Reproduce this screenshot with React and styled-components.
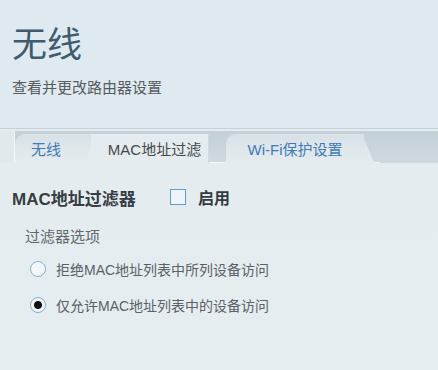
import React, { useState } from "react";
import styled, { createGlobalStyle } from "styled-components";

const GlobalStyle = createGlobalStyle`
  html, body {
    margin: 0;
    padding: 0;
    background: #e5ecf0;
    font-family: "Liberation Sans", "Noto Sans CJK SC", sans-serif;
  }
`;

const tabs = [
  { id: "wireless", label: "无线", width: 76, pad: "0 22px 0 8px" },
  { id: "mac", label: "MAC地址过滤", width: 118, pad: "0 4px 0 14px" },
  { id: "wps", label: "Wi-Fi保护设置", width: 138, pad: "0 10px 0 10px" },
];

const options = [
  { id: "deny", label: "拒绝MAC地址列表中所列设备访问" },
  { id: "allow", label: "仅允许MAC地址列表中的设备访问" },
];

const App = () => {
  const [active, setActive] = useState("mac");
  const [mode, setMode] = useState("allow");
  const [enabled, setEnabled] = useState(false);

  return (
    <Page>
      <GlobalStyle />
      <Header>
        <Title>无线</Title>
        <Subtitle>查看并更改路由器设置</Subtitle>
      </Header>
      <TabBar>
        {tabs.map((tab) => (
          <Tab
            key={tab.id}
            $active={tab.id === active}
            $width={tab.width}
            $pad={tab.pad}
            onClick={() => setActive(tab.id)}
          >
            {tab.label}
          </Tab>
        ))}
      </TabBar>
      <Content>
        <FilterRow>
          <SectionTitle>MAC地址过滤器</SectionTitle>
          <CheckLabel>
            <CheckBox
              $checked={enabled}
              onClick={() => setEnabled(!enabled)}
            />
            启用
          </CheckLabel>
        </FilterRow>
        <GroupLabel>过滤器选项</GroupLabel>
        <RadioList>
          {options.map((opt) => (
            <RadioRow key={opt.id} onClick={() => setMode(opt.id)}>
              <Radio $checked={mode === opt.id} />
              <RadioText>{opt.label}</RadioText>
            </RadioRow>
          ))}
        </RadioList>
      </Content>
    </Page>
  );
};

const Page = styled.div`
  width: 438px;
  height: 370px;
  overflow: hidden;
  background: linear-gradient(180deg, #e4ebef 0%, #e6edf1 100%);
`;

const Header = styled.div`
  height: 129px;
  background: #dfe9f0;
  padding: 22px 0 0 12px;
  box-sizing: border-box;
  border-bottom: 1px solid #c6cfd5;
`;

const Title = styled.div`
  font-family: "Noto Sans CJK SC", sans-serif;
  font-size: 35px;
  line-height: 40px;
  color: #3e5b6f;
`;

const Subtitle = styled.div`
  font-family: "Noto Sans CJK SC", sans-serif;
  margin-top: 15px;
  font-size: 15px;
  line-height: 20px;
  color: #565c61;
`;

const TabBar = styled.div`
  display: flex;
  align-items: flex-end;
  height: 32px;
  margin: 2px 0 0 14px;
  border-left: 1px solid #f4f7f9;
  background: linear-gradient(180deg, #c3d0d7 0%, #cfdae0 100%);
  box-shadow: -14px 0 0 #e2e9ed;
  position: relative;
  &::after {
    content: "";
    position: absolute;
    left: 0;
    right: 58px;
    bottom: 0;
    height: 1px;
    background: #f2f6f8;
  }
`;

const Tab = styled.div`
  position: relative;
  z-index: ${(p) => (p.$active ? 2 : 1)};
  height: 29px;
  display: flex;
  align-items: center;
  justify-content: center;
  box-sizing: border-box;
  padding: ${(p) => p.$pad};
  width: ${(p) => p.$width}px;
  margin-right: ${(p) => (p.$active ? "17px" : "0")};
  font-family: "Liberation Sans", "Noto Sans CJK SC", sans-serif;
  font-size: 15px;
  white-space: nowrap;
  color: ${(p) => (p.$active ? "#45494d" : "#3f7bb7")};
  background: ${(p) =>
    p.$active ? "#e5ecef" : "linear-gradient(180deg, #d7e1e6 0%, #e6ecef 100%)"};
  border-top-left-radius: ${(p) => (p.$active ? "0" : "10px")};
  border-right: ${(p) => (p.$active ? "1px solid #d2dade" : "none")};
  cursor: pointer;
  &::before {
    content: "";
    display: ${(p) => (p.$active ? "block" : "none")};
    position: absolute;
    top: 0;
    bottom: 0;
    left: -6px;
    width: 14px;
    background: #e5ecef;
    transform: skewX(-20deg);
    transform-origin: bottom;
  }
  &::after {
    content: "";
    display: ${(p) => (p.$active ? "none" : "block")};
    position: absolute;
    top: 0;
    bottom: 0;
    right: -10px;
    width: 22px;
    background: linear-gradient(180deg, #d7e1e6 0%, #e6ecef 100%);
    border-top-right-radius: 8px;
    transform: skewX(22deg);
    transform-origin: bottom;
    z-index: -1;
  }
`;

const Content = styled.div`
  padding: 22px 0 0 12px;
`;

const FilterRow = styled.div`
  display: flex;
  align-items: center;
  height: 24px;
`;

const SectionTitle = styled.div`
  font-family: "Liberation Sans", "Noto Sans CJK SC", sans-serif;
  font-weight: bold;
  font-size: 17px;
  color: #363d43;
  width: 158px;
`;

const CheckLabel = styled.label`
  display: flex;
  align-items: center;
  gap: 12px;
  font-family: "Noto Sans CJK SC", sans-serif;
  font-weight: bold;
  font-size: 16px;
  color: #353a3e;
`;

const CheckBox = styled.span`
  width: 16px;
  height: 16px;
  box-sizing: border-box;
  border: 1.5px solid #5c9fca;
  background: ${(p) => (p.$checked ? "#5c9fca" : "#eef4f8")};
`;

const GroupLabel = styled.div`
  margin: 17px 0 0 13px;
  font-family: "Noto Sans CJK SC", sans-serif;
  font-size: 15px;
  line-height: 20px;
  color: #62686d;
`;

const RadioList = styled.div`
  display: flex;
  flex-direction: column;
  gap: 16px;
  margin: 13px 0 0 18px;
`;

const RadioRow = styled.div`
  display: flex;
  align-items: center;
  gap: 10px;
  height: 20px;
  cursor: pointer;
`;

const Radio = styled.span`
  width: 16px;
  height: 16px;
  box-sizing: border-box;
  border-radius: 50%;
  border: 1.5px solid #84afcb;
  background: ${(p) =>
    p.$checked
      ? "radial-gradient(circle, #111 0, #111 3.5px, #f4f7f9 4.5px)"
      : "#f4f7f9"};
`;

const RadioText = styled.span`
  font-family: "Liberation Sans", "Noto Sans CJK SC", sans-serif;
  font-size: 14px;
  color: #5b6166;
`;

export default App;
